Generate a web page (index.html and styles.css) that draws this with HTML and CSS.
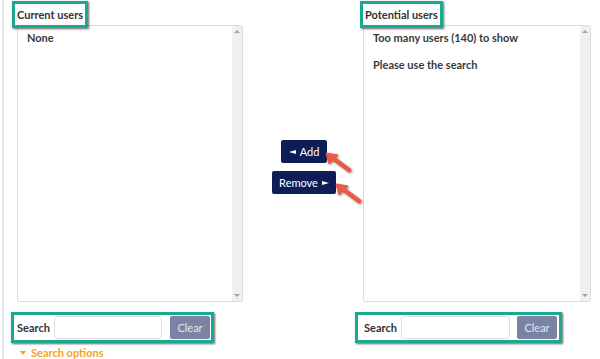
FILE: index.html
```html
<!DOCTYPE html>
<html>
<head>
    <title>Enrol users</title>
    <link rel="stylesheet" href="styles.css">
</head>
<body>
    <div class="page">
        <div class="selector">
            <div class="side side-left">
                <label class="mark caption">Current users</label>
                <div class="listbox">
                    <div class="list-items">
                        <p>None</p>
                    </div>
                    <div class="scroll"><span class="up"></span><span class="down"></span></div>
                </div>
                <div class="mark search-row">
                    <span>Search</span>
                    <input type="text">
                    <button class="clear">Clear</button>
                </div>
                <a class="options" href="#"><span class="caret"></span>Search options</a>
            </div>
            <div class="middle">
                <button class="move move-add"><span class="tri tri-left"></span>Add</button>
                <button class="move move-remove">Remove<span class="tri tri-right"></span></button>
                <svg class="pointer pointer-add" width="32" height="26" viewBox="0 0 32 26">
                    <path d="M6 5 L25 19" stroke="#ea5a47" stroke-width="4.5" stroke-linecap="round"/>
                    <path d="M2 2 L14 4 L5 13 Z" fill="#ea5a47" stroke="#ea5a47" stroke-linejoin="round"/>
                </svg>
                <svg class="pointer pointer-remove" width="32" height="26" viewBox="0 0 32 26">
                    <path d="M6 5 L25 19" stroke="#ea5a47" stroke-width="4.5" stroke-linecap="round"/>
                    <path d="M2 2 L14 4 L5 13 Z" fill="#ea5a47" stroke="#ea5a47" stroke-linejoin="round"/>
                </svg>
            </div>
            <div class="side side-right">
                <label class="mark caption">Potential users</label>
                <div class="listbox">
                    <div class="list-items">
                        <p>Too many users (140) to show</p>
                        <p>Please use the search</p>
                    </div>
                    <div class="scroll"><span class="up"></span><span class="down"></span></div>
                </div>
                <div class="mark search-row">
                    <span>Search</span>
                    <input type="text">
                    <button class="clear">Clear</button>
                </div>
            </div>
        </div>
    </div>
</body>
</html>
```

FILE: styles.css
```css
body {
    margin: 0;
    padding: 0;
    font-family: Lato, "Open Sans", Arial, sans-serif;
    font-size: 11px;
    line-height: 13px;
    color: #333;
    background-color: #fff;
}
.page {
    margin-left: 2px;
    border-left: 2px solid #e6e8eb;
    height: 359px;
    overflow: hidden;
}
.selector {
    display: flex;
    padding-left: 7px;
}
.side {
    display: flex;
    flex-direction: column;
}
.side-left {
    width: 232px;
}
.side-right {
    width: 236px;
}
.mark {
    box-sizing: border-box;
    border: 3px solid #1aa88e;
    box-shadow: 1px 1px 2px rgba(0, 0, 0, 0.6);
}
.caption {
    align-self: flex-start;
    font-weight: 700;
    padding: 4px 2px 4px 2px;
    margin-top: 1px;
    position: relative;
    z-index: 1;
    background: #fff;
}
.side-left .caption {
    margin-left: 1px;
}
.side-right .caption {
    margin-left: 5px;
}
.listbox {
    box-sizing: border-box;
    display: flex;
    height: 277px;
    margin-top: -3px;
    border: 1px solid #dcdcdc;
    border-radius: 2px;
}
.side-left .listbox {
    margin-left: 6px;
}
.side-right .listbox {
    margin-left: 8px;
}
.list-items {
    flex: 1;
    padding: 5px 9px;
    font-weight: 700;
    color: #3a3a3a;
}
.list-items p {
    margin: 0 0 14px 0;
}
.scroll {
    width: 10px;
    background-color: #f0f0f0;
    display: flex;
    flex-direction: column;
    justify-content: space-between;
    align-items: center;
    padding: 4px 0;
}
.up, .down {
    width: 0;
    height: 0;
    border-left: 3px solid transparent;
    border-right: 3px solid transparent;
}
.up {
    border-bottom: 3px solid #a3a3a3;
}
.down {
    border-top: 3px solid #a3a3a3;
}
.search-row {
    display: flex;
    align-items: center;
    margin-top: 10px;
    padding: 1px 1px 1px 3px;
    width: 203px;
    font-weight: 700;
}
.side-right .search-row {
    width: 207px;
    padding: 1px 2px 1px 6px;
}
.search-row span {
    width: 37px;
}
.search-row input {
    box-sizing: border-box;
    width: 108px;
    height: 23px;
    border: 1px solid #dedede;
    border-radius: 3px;
    padding: 0 3px;
    margin: 0;
}
.side-right .search-row input {
    width: 109px;
}
.clear {
    margin-left: 8px;
    width: 40px;
    height: 23px;
    padding: 0;
    border: none;
    border-radius: 2px;
    background-color: #7a83a3;
    color: #e3e6ef;
    font-family: Lato, "Open Sans", Arial, sans-serif;
    font-size: 11px;
}
.side-right .clear {
    margin-left: 7px;
}
.options {
    color: #f5a21c;
    font-weight: 700;
    text-decoration: none;
    margin-left: 9px;
    margin-top: 3px;
}
.caret {
    display: inline-block;
    width: 0;
    height: 0;
    border-left: 3px solid transparent;
    border-right: 3px solid transparent;
    border-top: 4px solid #f5a21c;
    margin-right: 5px;
    vertical-align: 2px;
}
.middle {
    position: relative;
    width: 112px;
    box-sizing: border-box;
    display: flex;
    flex-direction: column;
    align-items: center;
    padding-top: 140px;
    padding-left: 10px;
    gap: 8px;
}
.move {
    height: 23px;
    padding: 0;
    border: none;
    border-radius: 2px;
    background-color: #0f1d56;
    color: #fff;
    font-family: Lato, "Open Sans", Arial, sans-serif;
    font-size: 11px;
}
.move-add {
    width: 46px;
}
.move-remove {
    width: 64px;
}
.tri {
    display: inline-block;
    width: 0;
    height: 0;
    border-top: 2px solid transparent;
    border-bottom: 2px solid transparent;
    vertical-align: 2px;
}
.tri-left {
    border-right: 7px solid #fff;
    margin-right: 4px;
}
.tri-right {
    border-left: 7px solid #fff;
    margin-left: 4px;
}
.pointer {
    position: absolute;
    filter: drop-shadow(1px 1px 1px rgba(0, 0, 0, 0.45));
}
.pointer-add {
    left: 81px;
    top: 151px;
}
.pointer-remove {
    left: 91px;
    top: 182px;
}
```
